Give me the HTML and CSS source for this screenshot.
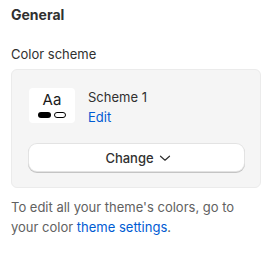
FILE: index.html
```html
<!DOCTYPE html>
<html>
<head>
<meta charset="utf-8">
<link rel="stylesheet" href="styles.css">
</head>
<body>
<div class="panel">
  <h2 class="title">General</h2>
  <div class="label">Color scheme</div>
  <div class="card">
    <div class="scheme">
      <div class="swatch">
        <span class="aa">Aa</span>
        <span class="pills"><span class="pill dark"></span><span class="pill light"></span></span>
      </div>
      <div class="info">
        <div class="name">Scheme 1</div>
        <a class="link" href="#">Edit</a>
      </div>
    </div>
    <button class="change">Change
      <svg width="14" height="14" viewBox="0 0 14 14"><path d="M2.5 5.2 7 9.2l4.5-4" fill="none" stroke="#303030" stroke-width="1.2" stroke-linecap="round" stroke-linejoin="round"/></svg>
    </button>
  </div>
  <p class="note">To edit all your theme's colors, go to your color <a class="link" href="#">theme settings</a>.</p>
</div>
</body>
</html>
```
FILE: styles.css
```css
html, body { margin: 0; background: #fff; }
body { font-family: Inter, "Noto Sans", sans-serif; font-size: 13px; line-height: 20px; color: #303030; }
.panel { padding: 5px 16px 0 11px; }
.title { margin: 0; font-size: 14px; font-weight: 650; line-height: 20px; color: #303030; }
.label { margin-top: 19px; margin-bottom: 5px; }
.card { background: #f5f5f5; border: 1px solid #ebebeb; border-radius: 6px; padding: 18px 16px 16px 17px; }
.scheme { display: flex; gap: 13px; align-items: flex-start; }
.swatch { width: 46px; height: 35px; background: #fff; border-radius: 4px; display: flex; flex-direction: column; align-items: center; box-sizing: border-box; padding-top: 4px; }
.aa { font-size: 15px; line-height: 16px; color: #1a1a1a; }
.pills { display: flex; gap: 3px; margin-top: 4px; }
.pill { width: 13px; height: 6px; border-radius: 3px; box-sizing: border-box; }
.pill.dark { background: #000; }
.pill.light { width: 12px; border: 1px solid #000; background: #fff; }
.info { margin-top: -1px; display: flex; flex-direction: column; }
.name { color: #303030; }
.link { color: #005bd3; text-decoration: none; }
.change { margin-top: 17px; width: 100%; height: 27px; display: flex; align-items: center; justify-content: center; gap: 4px; background: #fff; border: 0; border-radius: 8px; box-shadow: 0 0 0 1px #e3e3e3, 0 1px 0 1px #c4c4c4; font-family: inherit; font-size: 13px; font-weight: 500; color: #303030; padding: 0 0 0 4px; }
.change svg { display: block; }
.note { margin: 9px 0 0; color: #616161; }
```
